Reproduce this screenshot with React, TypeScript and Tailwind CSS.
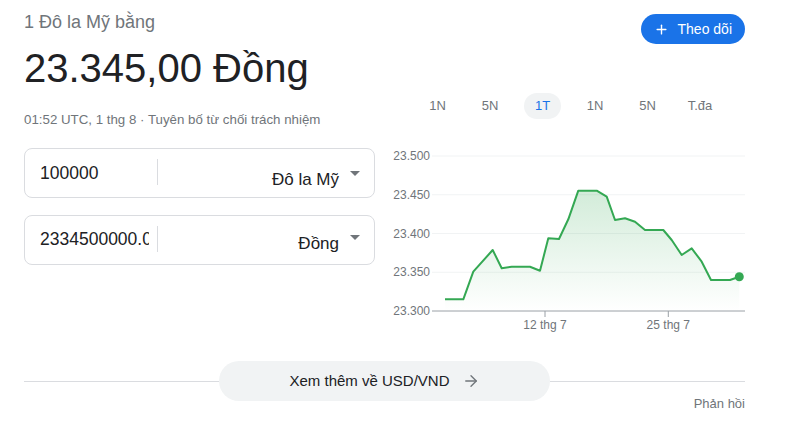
import { Plus, ArrowRight } from 'lucide-react';

const RANGES = ['1N', '5N', '1T', '1N', '5N', 'T.đa'];
const ACTIVE = 2;

// điểm của đường biểu đồ (toạ độ trong svg)
const POINTS: [number, number][] = [
    [65, 154.3], [83.3, 154.3], [93.3, 126.7], [112.7, 105], [121.7, 123.3],
    [131.7, 121.7], [150, 121.7], [160, 125.7], [168.3, 93.3], [179, 94],
    [188.3, 74.3], [198.3, 45.7], [216.7, 45.7], [226.7, 51.7], [235, 75],
    [245, 73.3], [255, 76.7], [265, 85], [283.3, 85], [291.7, 95],
    [301.7, 110], [311.7, 103.3], [321.7, 116.7], [331, 135], [350, 135],
    [359.3, 131.7],
];

const GRID = [
    { label: '23.500', y: 11 },
    { label: '23.450', y: 49.75 },
    { label: '23.400', y: 88.5 },
    { label: '23.350', y: 127.25 },
    { label: '23.300', y: 166 },
];

const TICKS = [
    { label: '12 thg 7', x: 165 },
    { label: '25 thg 7', x: 288.3 },
];

const line = POINTS.map(([x, y], i) => `${i ? 'L' : 'M'}${x} ${y}`).join(' ');
const area = `${line} L${POINTS[POINTS.length - 1][0]} 166 L${POINTS[0][0]} 166 Z`;
const last = POINTS[POINTS.length - 1];

interface CurrencyBoxProps {
    value: string;
    currency: string;
    numTop: string;
    selTop: string;
}

const CurrencyBox = ({ value, currency, numTop, selTop }: CurrencyBoxProps) => (
    <div className="flex h-[50px] w-full rounded-lg border border-[#dadce0]">
        <div className={`ml-[15px] w-[109px] overflow-hidden whitespace-nowrap text-[17.5px] leading-5 text-[#202124] ${numTop}`}>
            {value}
        </div>
        <div className="ml-[8px] mt-[10px] h-[26px] w-px bg-[#dadce0]" />
        <div className={`flex flex-1 justify-end gap-[11px] pr-[14px] ${selTop}`}>
            <span className="text-[17px] leading-5 text-[#202124]">{currency}</span>
            <span className="mt-[1px] h-0 w-0 border-x-[5px] border-t-[5px] border-x-transparent border-t-[#70757a]" />
        </div>
    </div>
);

const Chart = () => (
    <svg width="365" height="195" className="mt-[26px] block" style={{ fontFamily: '"Liberation Sans", Arial, sans-serif' }}>
        <defs>
            <linearGradient id="fill" x1="0" y1="0" x2="0" y2="1">
                <stop offset="0%" stopColor="#34a853" stopOpacity="0.22" />
                <stop offset="100%" stopColor="#34a853" stopOpacity="0" />
            </linearGradient>
        </defs>
        {GRID.slice(0, 4).map((g) => (
            <line key={g.label} x1="52" x2="365" y1={g.y} y2={g.y} stroke="#f1f3f4" strokeWidth="1" />
        ))}
        {GRID.map((g) => (
            <text key={g.label} x="50" y={g.y + 4} textAnchor="end" fontSize="12" fill="#70757a">
                {g.label}
            </text>
        ))}
        <path d={area} fill="url(#fill)" />
        <path d={line} fill="none" stroke="#34a853" strokeWidth="2" strokeLinejoin="round" />
        <circle cx={last[0]} cy={last[1]} r="4.5" fill="#34a853" />
        <line x1="52" x2="365" y1="166" y2="166" stroke="#9aa0a6" strokeWidth="1" />
        {TICKS.map((t) => (
            <g key={t.label}>
                <line x1={t.x} x2={t.x} y1="166" y2="172" stroke="#9aa0a6" strokeWidth="1" />
                <text x={t.x} y="184" textAnchor="middle" fontSize="12" fill="#70757a">
                    {t.label}
                </text>
            </g>
        ))}
    </svg>
);

export default function App() {
    return (
        <div className="w-[800px] h-[433px] bg-white pl-6 pr-[55px] font-['Liberation_Sans',Arial,sans-serif]">
            <div className="flex">
                <div className="flex w-[351px] flex-col">
                    <p className="mt-[10px] text-[18px] leading-6 text-[#70757a]">1 Đô la Mỹ bằng</p>
                    <p className="mt-[10px] text-[40px] leading-[48px] text-[#202124]">23.345,00 Đồng</p>
                    <p className="mt-[18px] text-[13.3px] leading-5 text-[#70757a]">
                        01:52 UTC, 1 thg 8 · Tuyên bố từ chối trách nhiệm
                    </p>
                    <div className="mt-[18px] flex flex-col gap-[17px]">
                        <CurrencyBox value="100000" currency="Đô la Mỹ" numTop="pt-[14px]" selTop="pt-[21px]" />
                        <CurrencyBox value="2334500000.0" currency="Đồng" numTop="pt-[13px]" selTop="pt-[18px]" />
                    </div>
                </div>

                <div className="ml-[5px] flex w-[365px] flex-col">
                    <button className="mt-[14px] flex h-[30px] items-center gap-[9px] self-end rounded-full bg-[#1a73e8] pl-[13px] pr-[13px] text-[14px] text-white">
                        <Plus size={15} strokeWidth={2.2} />
                        Theo dõi
                    </button>

                    <div className="mt-[49px] ml-[39px] flex gap-[15.5px]">
                        {RANGES.map((r, i) => (
                            <span
                                key={i}
                                className={`flex h-[26px] w-[37px] items-center justify-center rounded-full text-[13px] ${
                                    i === ACTIVE ? 'bg-[#f1f3f4] text-[#1a73e8]' : 'text-[#70757a]'
                                }`}
                            >
                                {r}
                            </span>
                        ))}
                    </div>

                    <Chart />
                </div>
            </div>

            <div className="mt-[21px] flex items-center">
                <div className="h-px flex-1 bg-[#dadce0]" />
                <button className="flex h-10 w-[331px] items-center justify-center gap-3 rounded-full bg-[#f1f3f4] text-[15px] text-[#202124]">
                    Xem thêm về USD/VND
                    <ArrowRight size={18} strokeWidth={1.8} className="text-[#70757a]" />
                </button>
                <div className="h-px flex-1 bg-[#dadce0]" />
            </div>
            <p className="-mt-[5px] text-right text-[13px] leading-4 text-[#70757a]">Phản hồi</p>
        </div>
    );
}
